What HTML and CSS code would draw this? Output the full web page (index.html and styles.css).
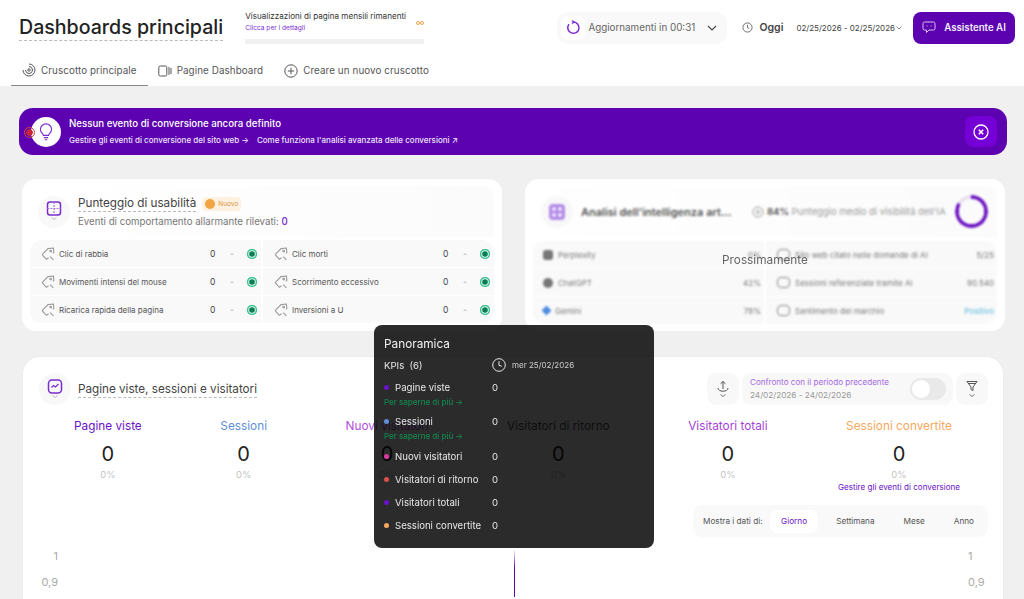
FILE: index.html
```html
<!DOCTYPE html>
<html lang="it">
<head>
  <meta charset="UTF-8">
  <meta name="viewport" content="width=device-width, initial-scale=1.0">
  <title>Dashboards principali</title>
  <link rel="stylesheet" href="styles.css">
</head>
<body>
  <header class="header">
    <div class="topbar">
      <h1 class="page-title">Dashboards principali</h1>
      <div class="usage">
        <div class="usage-text">
          <div>
            <div class="usage-label">Visualizzazioni di pagina mensili rimanenti</div>
            <div class="usage-link">Clicca per i dettagli</div>
          </div>
          <svg class="usage-inf" width="8" height="4" viewBox="0 0 8 4" fill="none" stroke="#e8993f" stroke-width=".9"><circle cx="2" cy="2" r="1.500"/><circle cx="6" cy="2" r="1.500"/></svg>
        </div>
        <div class="usage-bar"></div>
      </div>
      <div class="top-actions">
        <div class="refresh">
          <span class="refresh-icon">
            <svg width="15" height="15" viewBox="0 0 16 16" fill="none" stroke="#7a2bd0" stroke-width="1.600" stroke-linecap="round"><path d="M8 2.200A6 6 0 1 1 2.800 5"/><path d="M7 .4l2.400 1.800L7 4z" fill="#7a2bd0" stroke-width=".6"/></svg>
          </span>
          <span class="refresh-text">Aggiornamenti in 00:31</span>
          <svg class="refresh-caret" width="10" height="6" viewBox="0 0 10 6" fill="none" stroke="#444" stroke-width="1.100"><path d="M1 1l4 4 4-4"/></svg>
        </div>
        <svg class="clock" width="11" height="11" viewBox="0 0 12 12" fill="none" stroke="#555" stroke-width=".9"><circle cx="6" cy="6" r="5"/><path d="M6 3v3.200l2 .8"/></svg>
        <span class="today">Oggi</span>
        <span class="dates">02/25/2026 - 02/25/2026<svg width="6" height="4" viewBox="0 0 6 4" fill="none" stroke="#555" stroke-width=".7"><path d="M.5.5L3 3 5.500.5"/></svg></span>
        <button class="ai-btn">
          <svg width="14" height="13" viewBox="0 0 14 13" fill="none" stroke="#d9c2f2" stroke-width="1"><path d="M2.500 1h9A1.500 1.500 0 0 1 13 2.500v5A1.500 1.500 0 0 1 11.500 9H7l-2.500 2.500V9h-2A1.500 1.500 0 0 1 1 7.500v-5A1.500 1.500 0 0 1 2.500 1z"/><path d="M4.500 5h1M8.500 5h1"/></svg>
          Assistente AI
        </button>
      </div>
    </div>
    <nav class="tabs">
      <a class="tab active">
        <svg width="14" height="14" viewBox="0 0 14 14" fill="none" stroke="#555" stroke-width="1"><path d="M7 1a6 6 0 1 1-6 6"/><path d="M7 3.500A3.500 3.500 0 1 1 3.500 7"/><circle cx="7" cy="7" r="1.200"/></svg>
        Cruscotto principale
      </a>
      <a class="tab">
        <svg width="14" height="14" viewBox="0 0 14 14" fill="none" stroke="#555" stroke-width="1"><rect x=".8" y="2" width="8" height="10" rx="1.500"/><path d="M11 3v8M13 4v6"/></svg>
        Pagine Dashboard
      </a>
      <a class="tab">
        <svg width="14" height="14" viewBox="0 0 14 14" fill="none" stroke="#555" stroke-width="1"><circle cx="7" cy="7" r="6.200"/><path d="M7 3.800v6.400M3.800 7h6.400"/></svg>
        Creare un nuovo cruscotto
      </a>
    </nav>
  </header>

  <section class="banner">
    <span class="banner-dot"></span>
    <span class="banner-icon">
      <svg width="14" height="18" viewBox="0 0 16 21" fill="none" stroke="#7a2bd0" stroke-width="1.300"><path d="M5 14.500C5 12.500 1.500 11.500 1.500 7.500a6.500 6.500 0 0 1 13 0c0 4-3.500 5-3.500 7z"/><path d="M5.500 17h5M6.500 19.500h3"/></svg>
    </span>
    <div class="banner-text">
      <div class="banner-title">Nessun evento di conversione ancora definito</div>
      <div class="banner-links">
        <a>Gestire gli eventi di conversione del sito web →</a>
        <a>Come funziona l'analisi avanzata delle conversioni ↗</a>
      </div>
    </div>
    <button class="banner-close">
      <svg width="16" height="16" viewBox="0 0 16 16" fill="none" stroke="#fff" stroke-width="1.300"><circle cx="8" cy="8" r="7"/><path d="M5.800 5.800l4.400 4.400M10.200 5.800l-4.400 4.400" stroke-width="1.600"/></svg>
    </button>
  </section>

  <section class="cards">
    <div class="card">
      <div class="card-head">
        <span class="icon-circle">
          <svg width="16" height="21" viewBox="0 0 16 21" fill="none"><rect x="1.500" y="1" width="13" height="13" rx="2.500" stroke="#7a2bd0" stroke-width="1.500"/><path d="M8 1v13M1.500 7.500h13" stroke="#a877e0" stroke-width="1.200" stroke-dasharray="2 1"/><path d="M5.500 16.500L8 18.500l2.500-2" stroke="#aaa" stroke-width=".8"/></svg>
        </span>
        <div>
          <div class="usability-title"><span class="dashed">Punteggio di usabilità</span><span class="badge"><i></i>Nuovo</span></div>
          <div class="usability-sub">Eventi di comportamento allarmante rilevati: <b>0</b></div>
        </div>
      </div>
      <div class="rows">
        <div class="row"><svg class="tag" width="14" height="14" viewBox="0 0 13 13"><path d="M1 7l5.500-5.500L11.500 1 12 5l-1 1M1 7l4 4.500 2-1.500"/><circle cx="9" cy="3.800" r=".8"/><path d="M8.500 9l3 3"/></svg><span class="row-name">Clic di rabbia</span><span class="row-val">0</span><span class="row-caret"></span><span class="row-ok"></span></div>
        <div class="row"><svg class="tag" width="14" height="14" viewBox="0 0 13 13"><path d="M1 7l5.500-5.500L11.500 1 12 5l-1 1M1 7l4 4.500 2-1.500"/><circle cx="9" cy="3.800" r=".8"/><path d="M8.500 9l3 3"/></svg><span class="row-name">Clic morti</span><span class="row-val">0</span><span class="row-caret"></span><span class="row-ok"></span></div>
        <div class="row"><svg class="tag" width="14" height="14" viewBox="0 0 13 13"><path d="M1 7l5.500-5.500L11.500 1 12 5l-1 1M1 7l4 4.500 2-1.500"/><circle cx="9" cy="3.800" r=".8"/><path d="M8.500 9l3 3"/></svg><span class="row-name">Movimenti intensi del mouse</span><span class="row-val">0</span><span class="row-caret"></span><span class="row-ok"></span></div>
        <div class="row"><svg class="tag" width="14" height="14" viewBox="0 0 13 13"><path d="M1 7l5.500-5.500L11.500 1 12 5l-1 1M1 7l4 4.500 2-1.500"/><circle cx="9" cy="3.800" r=".8"/><path d="M8.500 9l3 3"/></svg><span class="row-name">Scorrimento eccessivo</span><span class="row-val">0</span><span class="row-caret"></span><span class="row-ok"></span></div>
        <div class="row"><svg class="tag" width="14" height="14" viewBox="0 0 13 13"><path d="M1 7l5.500-5.500L11.500 1 12 5l-1 1M1 7l4 4.500 2-1.500"/><circle cx="9" cy="3.800" r=".8"/><path d="M8.500 9l3 3"/></svg><span class="row-name">Ricarica rapida della pagina</span><span class="row-val">0</span><span class="row-caret"></span><span class="row-ok"></span></div>
        <div class="row"><svg class="tag" width="14" height="14" viewBox="0 0 13 13"><path d="M1 7l5.500-5.500L11.500 1 12 5l-1 1M1 7l4 4.500 2-1.500"/><circle cx="9" cy="3.800" r=".8"/><path d="M8.500 9l3 3"/></svg><span class="row-name">Inversioni a U</span><span class="row-val">0</span><span class="row-caret"></span><span class="row-ok"></span></div>
      </div>
    </div>

    <div class="card card-soon">
      <div class="blurred">
        <div class="card-head">
          <span class="icon-circle">
            <svg width="16" height="16" viewBox="0 0 16 16"><rect width="16" height="16" rx="4" fill="#b58be8"/><g fill="#fff"><circle cx="5" cy="5" r="1.800"/><circle cx="11" cy="5" r="1.800"/><circle cx="5" cy="11" r="1.800"/><circle cx="11" cy="11" r="1.800"/></g></svg>
          </span>
          <span class="ai-title">Analisi dell'intelligenza art...</span>
          <svg class="ai-clock" width="12" height="12" viewBox="0 0 12 12" fill="none" stroke="#999"><circle cx="6" cy="6" r="5"/><circle cx="6" cy="6" r="1.500"/></svg>
          <span class="ai-score"><b>84%</b> Punteggio medio di visibilità dell'IA</span>
          <span class="donut"></span>
        </div>
        <div class="rows soon-rows">
          <div class="row ai-row"><i class="ai-logo"></i><span class="row-name">Perplexity</span><span class="ai-val">0%</span></div>
          <div class="row ai-row"><i class="ai-logo light"></i><span class="row-name">Sito web citato nelle domande di AI</span><span class="ai-val">5/25</span></div>
          <div class="row ai-row"><i class="ai-logo round"></i><span class="row-name">ChatGPT</span><span class="ai-val">42%</span></div>
          <div class="row ai-row"><i class="ai-logo light"></i><span class="row-name">Sessioni referenziate tramite AI</span><span class="ai-val">90.540</span></div>
          <div class="row ai-row"><i class="ai-logo gem"></i><span class="row-name">Gemini</span><span class="ai-val">78%</span></div>
          <div class="row ai-row"><i class="ai-logo light"></i><span class="row-name">Sentimento del marchio</span><span class="ai-val positive">Positivo</span></div>
        </div>
      </div>
      <div class="soon-label">Prossimamente</div>
    </div>
  </section>

  <section class="big-card">
    <div class="big-head">
      <span class="icon-circle">
        <svg width="16" height="21" viewBox="0 0 16 21" fill="none"><rect x="1.500" y="1" width="13" height="13" rx="3.500" stroke="#7a2bd0" stroke-width="1.500"/><path d="M4.500 8.500l2-2 2 1.500 3-3" stroke="#7a2bd0" stroke-width="1.200"/><path d="M5.500 16.500L8 18.500l2.500-2" stroke="#aaa" stroke-width=".8"/></svg>
      </span>
      <h2 class="big-title">Pagine viste, sessioni e visitatori</h2>
      <div class="big-tools">
        <button class="tool-btn">
          <svg width="12" height="18" viewBox="0 0 12 18" fill="none" stroke="#555" stroke-width="1"><path d="M6 9V1.500M3.500 3.800L6 1.500l2.500 2.300"/><path d="M1 8c0 2 2 3.200 5 3.200s5-1.200 5-3.200"/><path d="M3.500 14.500L6 16.500l2.500-2" stroke-width=".8"/></svg>
        </button>
        <div class="compare">
          <div>
            <div class="compare-label">Confronto con il periodo precedente</div>
            <div class="compare-dates">24/02/2026 - 24/02/2026</div>
          </div>
          <span class="switch"><i></i></span>
        </div>
        <button class="tool-btn">
          <svg width="12" height="18" viewBox="0 0 12 18" fill="none" stroke="#555" stroke-width="1"><path d="M1 1.500h10L7 7v3.500L5 9.500V7z"/><path d="M2.500 3.500h7"/><path d="M3.500 14.500L6 16.500l2.500-2" stroke-width=".8"/></svg>
        </button>
      </div>
    </div>

    <div class="stats">
      <div class="stat"><div class="stat-label c-views">Pagine viste</div><div class="stat-num">0</div><div class="stat-pct">0%</div></div>
      <div class="stat"><div class="stat-label c-sessions">Sessioni</div><div class="stat-num">0</div><div class="stat-pct">0%</div></div>
      <div class="stat"><div class="stat-label c-new">Nuovi visitatori</div><div class="stat-num">0</div><div class="stat-pct">0%</div></div>
      <div class="stat"><div class="stat-label c-return">Visitatori di ritorno</div><div class="stat-num">0</div><div class="stat-pct">0%</div></div>
      <div class="stat"><div class="stat-label c-total">Visitatori totali</div><div class="stat-num">0</div><div class="stat-pct">0%</div></div>
      <div class="stat">
        <div class="stat-label c-conv">Sessioni convertite</div><div class="stat-num">0</div><div class="stat-pct">0%</div>
        <a class="stat-link">Gestire gli eventi di conversione</a>
      </div>
    </div>

    <div class="period-wrap">
      <div class="period">
        <span class="period-label">Mostra i dati di:</span>
        <span class="period-opt selected">Giorno</span>
        <span class="period-opt">Settimana</span>
        <span class="period-opt">Mese</span>
        <span class="period-opt">Anno</span>
      </div>
    </div>

    <div class="chart">
      <div class="axis"><span>1</span><span>0,9</span></div>
      <div class="chart-line"></div>
      <div class="axis axis-right"><span>1</span><span>0,9</span></div>
    </div>
  </section>

  <aside class="tooltip">
    <div class="tip-title">Panoramica</div>
    <div class="tip-head">
      <span>KPIs&nbsp; (6)</span>
      <span class="tip-date">
        <svg width="14" height="14" viewBox="0 0 14 14" fill="none" stroke="#e6e6e6" stroke-width="1"><circle cx="7" cy="7" r="6.300"/><path d="M7 3.200v4.200l2.800.8"/></svg>
        mer 25/02/2026
      </span>
    </div>
    <div class="tip-row tall"><span class="tip-name"><i class="dot d-views"></i>Pagine viste</span><span>0</span></div>
    <a class="tip-more">Per saperne di più →</a>
    <div class="tip-row tall"><span class="tip-name"><i class="dot d-sessions"></i>Sessioni</span><span>0</span></div>
    <a class="tip-more">Per saperne di più →</a>
    <div class="tip-row"><span class="tip-name"><i class="dot d-new"></i>Nuovi visitatori</span><span>0</span></div>
    <div class="tip-row"><span class="tip-name"><i class="dot d-return"></i>Visitatori di ritorno</span><span>0</span></div>
    <div class="tip-row"><span class="tip-name"><i class="dot d-total"></i>Visitatori totali</span><span>0</span></div>
    <div class="tip-row"><span class="tip-name"><i class="dot d-conv"></i>Sessioni convertite</span><span>0</span></div>
  </aside>
</body>
</html>
```

FILE: styles.css
```css
* {
  box-sizing: border-box;
}

html, body {
  height: 599px;
  overflow: hidden;
}

body {
  margin: 0;
  position: relative;
  background-color: #f0f0f0;
  font-family: Inter, "Liberation Sans", sans-serif;
  color: #333;
}

button {
  border: none;
  font-family: inherit;
  padding: 0;
}

/* header */
.header {
  height: 86px;
  background-color: #fff;
}

.topbar {
  height: 55px;
  display: flex;
  align-items: center;
  padding: 0 9px 0 19px;
}

.page-title {
  margin: 1px 0 0;
  font-size: 19.600px;
  font-weight: 500;
  line-height: 25px;
  color: #222;
  border-bottom: 1px dashed #bbb;
}

.usage {
  width: 179px;
  margin-left: 22px;
  height: 33px;
  display: flex;
  flex-direction: column;
  justify-content: space-between;
}

.usage-text {
  display: flex;
  justify-content: space-between;
  align-items: center;
}

.usage-label {
  font-size: 8.100px;
  line-height: 11px;
  color: #333;
}

.usage-link {
  font-size: 6.600px;
  line-height: 11px;
  margin-top: 1px;
  color: #7a2bd0;
}

.usage-bar {
  height: 5px;
  background-color: #f0f0f0;
}

.top-actions {
  margin-left: auto;
  display: flex;
  align-items: center;
}

.refresh {
  width: 170px;
  height: 32px;
  display: flex;
  align-items: center;
  padding: 0 10px 0 4px;
  background-color: #f9f9f9;
  border-radius: 11px;
}

.refresh-icon {
  width: 24px;
  height: 24px;
  display: flex;
  align-items: center;
  justify-content: center;
  background-color: #fff;
  border-radius: 7px;
}

.refresh-text {
  margin-left: 3px;
  font-size: 9.800px;
  color: #666;
}

.refresh-caret {
  margin-left: auto;
}

.clock {
  margin-left: 15px;
}

.today {
  margin-left: 6px;
  font-size: 10.500px;
  font-weight: 600;
  color: #444;
}

.dates {
  margin-left: 13px;
  font-size: 8px;
  color: #444;
  display: flex;
  align-items: center;
  gap: 1px;
}

.ai-btn {
  margin-left: 11px;
  width: 102px;
  height: 32px;
  display: flex;
  align-items: center;
  justify-content: center;
  gap: 8px;
  background-color: #5c02b0;
  color: #f2ebfa;
  font-size: 9.700px;
  font-weight: 600;
  border-radius: 8px;
}

.tabs {
  height: 31px;
  display: flex;
}

.tab {
  display: flex;
  align-items: center;
  gap: 5px;
  padding: 0 11px 0 10px;
  height: 31px;
  font-size: 9.800px;
  color: #555;
  letter-spacing: 0.1px;
}

.tab.active {
  margin-left: 11px;
  padding-left: 11px;
  border-bottom: 1px solid #888;
}

/* banner */
.banner {
  position: relative;
  height: 47px;
  margin: 22px 17px 0 19px;
  padding: 0 10px 0 12px;
  display: flex;
  align-items: center;
  background-color: #5c02b0;
  border-radius: 14px;
  color: #fff;
}

.banner-dot {
  position: absolute;
  z-index: 1;
  left: 5px;
  top: 19px;
  width: 11px;
  height: 11px;
  border: 1px solid #d8453a;
  border-radius: 50%;
  background: radial-gradient(circle, #c8243c 3px, transparent 3.500px);
}

.banner-icon {
  width: 30px;
  height: 30px;
  border-radius: 50%;
  background-color: #fff;
  display: flex;
  align-items: center;
  justify-content: center;
}

.banner-text {
  margin-left: 8px;
}

.banner-title {
  font-size: 9.700px;
  font-weight: 500;
  line-height: 13px;
}

.banner-links {
  display: flex;
  gap: 8px;
  margin-top: 5px;
  font-size: 8px;
  font-weight: 500;
  line-height: 11px;
  color: #eee2fa;
}

.banner-close {
  margin-left: auto;
  width: 32px;
  height: 31px;
  background-color: #7400d6;
  border-radius: 8px;
  display: flex;
  align-items: center;
  justify-content: center;
}

/* top cards */
.cards {
  display: flex;
  gap: 23px;
  margin: 24px 19px 0 22px;
}

.card {
  position: relative;
  width: 480px;
  height: 152px;
  padding: 7px 8px;
  background-color: #fff;
  border-radius: 14px;
}

.card-head {
  height: 51px;
  display: flex;
  align-items: center;
  padding-left: 8px;
  gap: 8px;
  border-radius: 12px 12px 0 0;
  background: linear-gradient(90deg, #fff, #fbfbfb);
}

.icon-circle {
  flex: none;
  width: 32px;
  height: 32px;
  border-radius: 50%;
  background-color: #f8f8f8;
  display: flex;
  align-items: center;
  justify-content: center;
}

.usability-title {
  display: flex;
  align-items: center;
  gap: 6px;
  font-size: 11.700px;
  line-height: 16px;
  color: #444;
}

.dashed {
  border-bottom: 1px dashed #bbb;
}

.badge {
  display: flex;
  align-items: center;
  gap: 3px;
  height: 14px;
  padding: 0 3px;
  font-size: 6.500px;
  color: #d99540;
  background-color: #fdf1e2;
  border-radius: 4px;
}

.badge i {
  width: 10px;
  height: 10px;
  border-radius: 50%;
  background-color: #f2a444;
}

.usability-sub {
  margin-top: 3px;
  font-size: 9.700px;
  line-height: 13px;
  color: #777;
}

.usability-sub b {
  font-weight: 500;
  color: #7a2bd0;
}

.rows {
  margin-top: 3px;
  display: grid;
  grid-template-columns: 232px 232px;
  grid-auto-rows: 27px;
  gap: 1px 0;
  border-radius: 12px;
  overflow: hidden;
}

.soon-rows {
  margin-top: 4px;
}

.row {
  display: flex;
  align-items: center;
  padding: 0 4px 0 11px;
  margin-right: 1px;
  background-color: #f9f9f9;
  font-size: 8px;
  color: #555;
}

.row:nth-child(even) {
  margin-right: 0;
  margin-left: 1px;
}

.tag {
  flex: none;
  fill: none;
  stroke: #999;
  stroke-width: 1;
}

.row-name {
  margin-left: 4px;
}

.row-val {
  margin-left: auto;
  width: 20px;
  font-size: 8.500px;
  color: #444;
}

.row-caret {
  width: 0;
  height: 0;
  margin-right: 13px;
  border-left: 2.500px solid transparent;
  border-right: 2.500px solid transparent;
  border-bottom: 2.500px solid #ccc;
}

.row-ok {
  width: 10px;
  height: 10px;
  border-radius: 50%;
  background-color: #0a7d55;
  box-shadow: inset 0 0 0 1.200px #2fbf8c, inset 0 0 0 2.200px #dff5ec;
}

/* coming soon card */
.blurred {
  filter: blur(1.300px);
}

.ai-title {
  width: 152px;
  font-size: 11px;
  font-weight: 600;
  color: #555;
  white-space: nowrap;
}

.ai-clock {
  margin-left: 11px;
}

.ai-score {
  margin-left: -5px;
  font-size: 9.400px;
  color: #999;
  white-space: nowrap;
}

.ai-score b {
  color: #555;
}

.donut {
  width: 33px;
  height: 33px;
  margin-left: 1px;
  border-radius: 50%;
  background: conic-gradient(#6a10c0 0 84%, #e6e0ee 84% 100%);
  -webkit-mask: radial-gradient(circle, transparent 12.500px, #000 13px);
  mask: radial-gradient(circle, transparent 12.500px, #000 13px);
}

.ai-row {
  padding: 0 3px 0 10px;
  font-size: 8px;
  color: #777;
}

.ai-row:nth-child(even) {
  padding-left: 11px;
}

.ai-logo {
  width: 10px;
  height: 10px;
  background-color: #777;
  border-radius: 3px;
}

.ai-logo.round {
  border-radius: 50%;
}

.ai-logo.light {
  width: 13px;
  height: 11px;
  background-color: transparent;
  border: 1px solid #888;
  border-radius: 4px;
}

.ai-logo.gem {
  width: 7px;
  height: 7px;
  border-radius: 1px;
  transform: rotate(45deg);
  background-color: #4d8be0;
}

.ai-val {
  margin-left: auto;
}

.ai-row .row-name {
  margin-left: 5px;
}

.positive {
  color: #58b8dd;
}

.soon-label {
  position: absolute;
  left: 0;
  right: 0;
  top: 74px;
  text-align: center;
  font-size: 11.800px;
  color: #666;
}

/* main chart card */
.big-card {
  height: 243px;
  margin: 25px 20px 0 22px;
  padding: 16px 15px 0 16px;
  background-color: #fff;
  border: 1px solid #ececec;
  border-bottom: none;
  border-radius: 18px 18px 0 0;
}

.big-head {
  height: 32px;
  display: flex;
  align-items: center;
}

.big-title {
  margin: 0 0 0 7px;
  font-size: 11.700px;
  font-weight: 400;
  line-height: 16px;
  color: #444;
  border-bottom: 1px dashed #bbb;
}

.big-tools {
  margin-left: auto;
  display: flex;
  gap: 3px;
}

.tool-btn {
  width: 32px;
  height: 32px;
  background-color: #f8f8f8;
  border-radius: 9px;
  display: flex;
  align-items: center;
  justify-content: center;
}

.compare {
  width: 211px;
  height: 32px;
  padding: 0 7px 0 8px;
  display: flex;
  align-items: center;
  justify-content: space-between;
  background-color: #f8f8f8;
  border-radius: 9px;
}

.compare-label {
  font-size: 8.100px;
  line-height: 11px;
  color: #a568e0;
}

.compare-dates {
  margin-top: 2px;
  font-size: 8.200px;
  line-height: 11px;
  color: #999;
}

.switch {
  width: 36px;
  height: 22px;
  padding: 2px;
  background-color: #e9e9e9;
  border-radius: 11px;
}

.switch i {
  display: block;
  width: 18px;
  height: 18px;
  border-radius: 50%;
  background-color: #fff;
}

.stats {
  margin-top: 13px;
  padding: 0 36px 0 35px;
  display: flex;
  justify-content: space-between;
}

.stat {
  position: relative;
  text-align: center;
}

.stat-label {
  font-size: 11.800px;
  line-height: 16px;
  white-space: nowrap;
}

.c-views { color: #6a12c8; }
.c-sessions { color: #5f8fd6; }
.c-new { color: #b24fe0; }
.c-return { color: #555; }
.c-total { color: #a63fd8; }
.c-conv { color: #f5a860; }

.stat-num {
  margin-top: 8px;
  font-size: 20px;
  line-height: 24px;
  color: #222;
}

.stat-pct {
  margin-top: 3px;
  font-size: 9.500px;
  line-height: 12px;
  color: #c4c4c4;
}

.stat-link {
  position: absolute;
  top: 64px;
  left: 50%;
  transform: translateX(-50%);
  font-size: 8.100px;
  line-height: 11px;
  color: #6a12c8;
  white-space: nowrap;
}

.period-wrap {
  margin-top: 24px;
  display: flex;
  justify-content: flex-end;
}

.period {
  width: 295px;
  height: 32px;
  padding: 0 14px 0 10px;
  display: flex;
  align-items: center;
  background-color: #f9f9f9;
  border-radius: 9px;
  font-size: 8.200px;
  color: #555;
}

.period-label {
  width: 59px;
  white-space: nowrap;
}

.period-opt {
  margin-left: 29px;
}

.period-opt.selected {
  width: 49px;
  margin-left: 8px;
  line-height: 23px;
  text-align: center;
  background-color: #fff;
  color: #6a12c8;
  border-radius: 7px;
}

.period-opt.selected + .period-opt {
  margin-left: 18px;
}

.chart {
  margin-top: 12px;
  display: flex;
  justify-content: space-between;
  height: 48px;
}

.axis {
  width: 19px;
  display: flex;
  flex-direction: column;
  align-items: flex-end;
  gap: 12px;
  font-size: 11px;
  line-height: 14px;
  color: #aaa;
}

.axis-right {
  width: 20px;
  align-items: flex-start;
}

.chart-line {
  width: 1px;
  height: 48px;
  margin-left: 3px;
  background: linear-gradient(180deg, #fff, #5c02b0 40%);
}

/* tooltip */
.tooltip {
  position: absolute;
  left: 374px;
  top: 325px;
  width: 280px;
  height: 223px;
  padding: 11px 10px 0;
  background-color: rgba(0, 0, 0, 0.83);
  border-radius: 8px;
  color: #e6e6e6;
  font-size: 9.600px;
}

.tip-title {
  font-size: 11.800px;
  line-height: 16px;
  color: #f0f0f0;
}

.tip-head {
  display: flex;
  align-items: center;
  height: 16px;
  margin: 5px 0 4px;
}

.tip-head > span:first-child {
  width: 108px;
}

.tip-date {
  display: flex;
  align-items: center;
  gap: 6px;
  font-size: 8px;
  color: #ccc;
}

.tip-row {
  display: flex;
  height: 23px;
  align-items: center;
}

.tip-row.tall {
  margin-top: 3px;
  height: 20px;
}

.tip-name {
  width: 108px;
  display: flex;
  align-items: center;
  white-space: nowrap;
}

.dot {
  width: 5px;
  height: 5px;
  margin-right: 6px;
  border-radius: 50%;
  flex: none;
}

.d-views { background-color: #6a12c8; }
.d-sessions { background-color: #5f8fd6; }
.d-new { background-color: #d83aa0; }
.d-return { background-color: #d8504a; }
.d-total { background-color: #6a12c8; }
.d-conv { background-color: #f5a860; }

.tip-more {
  display: block;
  font-size: 8px;
  font-weight: 500;
  line-height: 10px;
  margin-bottom: 4px;
  color: #12874f;
}
```
